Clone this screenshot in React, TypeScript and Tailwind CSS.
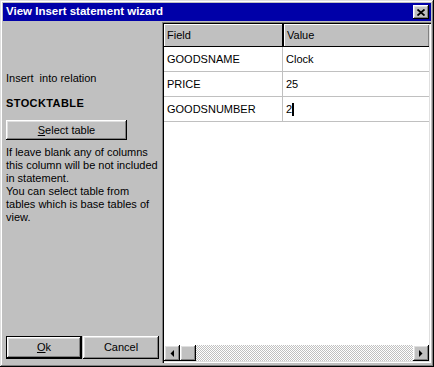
import React from "react";

const raised =
  "shadow-[inset_-1px_-1px_#000,inset_1px_1px_#fff,inset_-2px_-2px_#808080,inset_2px_2px_#dfdfdf]";

function Btn({ children, className = "" }: { children: React.ReactNode; className?: string }) {
  return (
    <div
      className={`flex items-center justify-center bg-[#c0c0c0] text-[11px] text-black ${raised} ${className}`}
    >
      {children}
    </div>
  );
}

function ArrowBtn({ dir }: { dir: "left" | "right" }) {
  return (
    <div className={`w-[16px] h-[16px] bg-[#c0c0c0] flex items-center justify-center ${raised}`}>
      <svg width="4" height="7" viewBox="0 0 4 7">
        {dir === "left" ? (
          <polygon points="4,0 4,7 0.5,3.5" fill="#000" />
        ) : (
          <polygon points="0,0 0,7 3.5,3.5" fill="#000" />
        )}
      </svg>
    </div>
  );
}

const rows = [
  ["GOODSNAME", "Clock"],
  ["PRICE", "25"],
  ["GOODSNUMBER", "2"],
];

export default function App() {
  return (
    <div
      className={`w-[434px] h-[367px] bg-[#c0c0c0] p-[3px] flex flex-col font-['Liberation_Sans',Arial,sans-serif] shadow-[inset_-1px_-1px_#000,inset_1px_1px_#dfdfdf,inset_-2px_-2px_#808080,inset_2px_2px_#fff]`}
    >
      {/* Title bar */}
      <div className="h-[18px] bg-[#0000a8] flex items-center justify-between pl-[3px] pr-[2px]">
        <span className="text-white font-bold text-[11.5px] leading-none">
          View Insert statement wizard
        </span>
        <div className={`w-[16px] h-[14px] bg-[#c0c0c0] flex items-center justify-center ${raised}`}>
          <svg width="8" height="7" viewBox="0 0 8 7">
            <path d="M0.5 0.5 L7.5 6.5 M7.5 0.5 L0.5 6.5" stroke="#000" strokeWidth="1.8" />
          </svg>
        </div>
      </div>

      {/* Body */}
      <div className="flex flex-1 min-h-0">
        {/* Left panel */}
        <div className="w-[156px] pl-[3px] flex flex-col text-black">
          <div className="mt-[51px] text-[11px] leading-[13px] whitespace-pre">Insert  into relation</div>
          <div className="mt-[12px] text-[11px] leading-[13px] font-bold tracking-[0.4px]">STOCKTABLE</div>
          <Btn className="mt-[10px] w-[121px] h-[20px]">
            <span>
              <span className="underline">S</span>elect table
            </span>
          </Btn>
          <div className="mt-[6px] text-[11px] leading-[13px]">
            If leave blank any of columns
            <br />
            this column will be not included
            <br />
            in statement.
            <br />
            You can select table from
            <br />
            tables which is base tables of
            <br />
            view.
          </div>
          <div className="mt-auto mb-[5px] flex gap-[1px]">
            <div className="w-[76px] h-[23px] border border-black">
              <Btn className="w-full h-full">
                <span>
                  <span className="underline">O</span>k
                </span>
              </Btn>
            </div>
            <Btn className="w-[76px] h-[23px]">Cancel</Btn>
          </div>
        </div>

        {/* Grid */}
        <div className="ml-[3px] mt-[1px] w-[269px] h-[341px] shadow-[inset_1px_1px_#808080,inset_2px_2px_#000,inset_-1px_-1px_#fff,inset_-2px_-2px_#dfdfdf] p-[2px] flex">
          <div className="flex-1 flex flex-col bg-white min-w-0">
            {/* header */}
            <div className="flex h-[23px] bg-[#c0c0c0] border-b border-black text-[11px] text-black">
              <div className="w-[120px] h-full flex items-center pl-[3px] border-r-2 border-black shadow-[inset_1px_1px_#fff]">
                Field
              </div>
              <div className="flex-1 h-full flex items-center pl-[3px] shadow-[inset_1px_1px_#fff,inset_-1px_0_#808080]">
                Value
              </div>
            </div>
            {rows.map(([f, v], i) => (
              <div key={f} className="flex h-[25px] border-b border-[#c0c0c0] text-[11px] text-black">
                <div className="w-[119px] flex items-center pl-[3px] border-r border-[#c0c0c0]">{f}</div>
                <div className="flex-1 flex items-center pl-[3px]">
                  {v}
                  {i === 2 && <span className="inline-block w-[2px] h-[13px] bg-black" />}
                </div>
              </div>
            ))}
            <div className="flex-1" />
            {/* scrollbar */}
            <div className="h-[16px] flex bg-[repeating-conic-gradient(#c0c0c0_0%_25%,#ffffff_0%_50%)] [background-size:2px_2px]">
              <ArrowBtn dir="left" />
              <div className={`w-[16px] h-[16px] bg-[#c0c0c0] ${raised}`} />
              <div className="flex-1" />
              <ArrowBtn dir="right" />
            </div>
          </div>
        </div>
      </div>
    </div>
  );
}
